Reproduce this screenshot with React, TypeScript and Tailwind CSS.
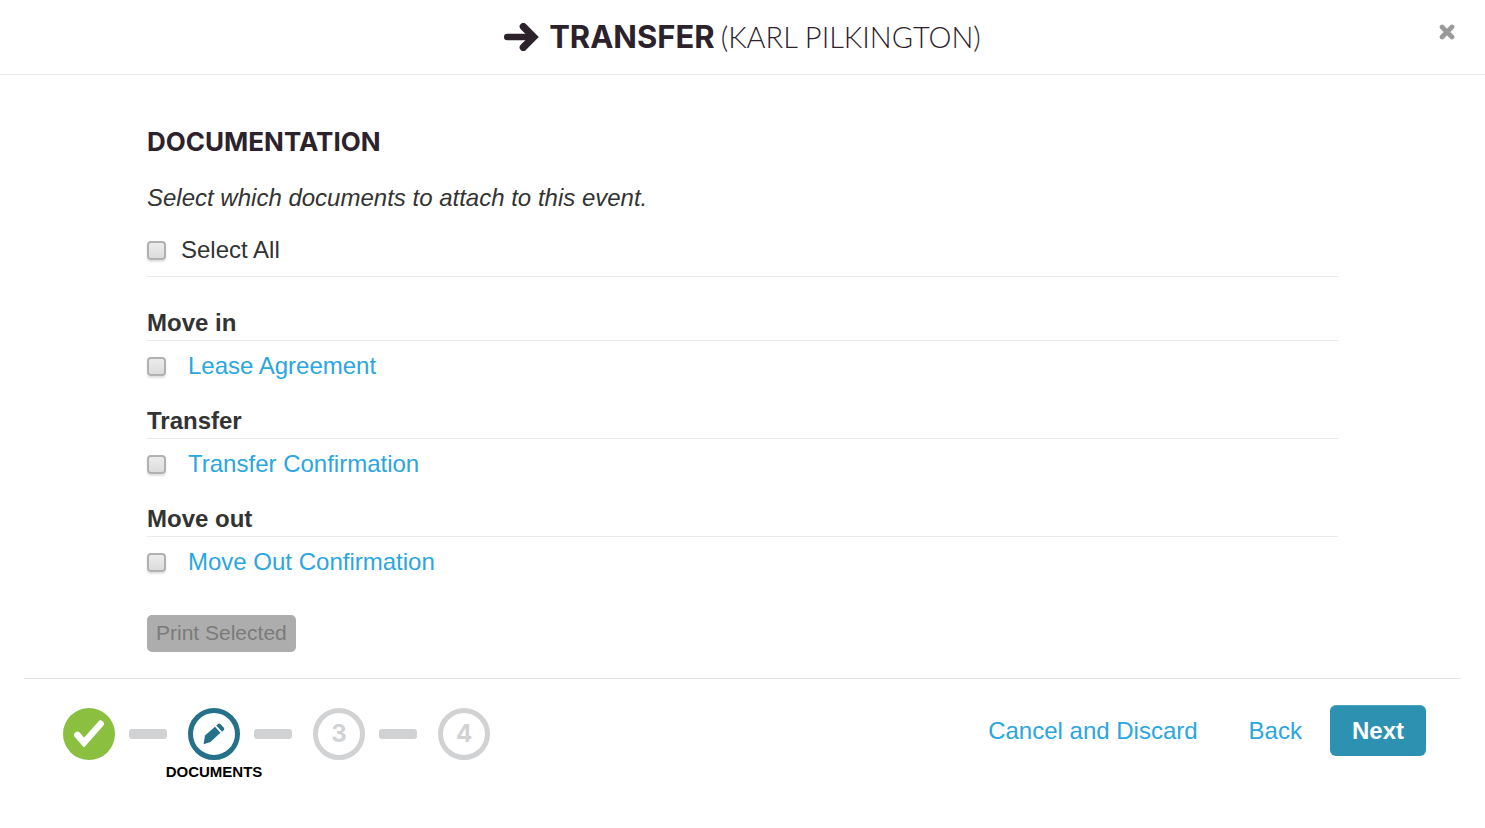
import { Fragment, useState } from "react";
import { clsx } from "clsx";

const SECTIONS = [
  { title: "Move in", document: "Lease Agreement" },
  { title: "Transfer", document: "Transfer Confirmation" },
  { title: "Move out", document: "Move Out Confirmation" },
];

const STEPS = [
  { name: "Details", status: "done" },
  { name: "Documents", status: "current" },
  { name: "3", status: "upcoming" },
  { name: "4", status: "upcoming" },
];

const ArrowIcon = () => (
  <svg width="35" height="28" viewBox="0 0 35 28" fill="none" stroke="currentColor" strokeLinecap="round" aria-hidden="true">
    <path d="M3.3 14H27" strokeWidth="6.6" />
    <path d="M19.3 3.6 29.7 14 19.3 24.4" strokeWidth="7.2" strokeLinejoin="miter" />
  </svg>
);

const CloseIcon = () => (
  <svg width="16" height="16" viewBox="0 0 16 16" fill="none" stroke="currentColor" strokeWidth="4.6" strokeLinecap="round" aria-hidden="true">
    <path d="M3 3l10 10M13 3L3 13" />
  </svg>
);

const CheckIcon = () => (
  <svg width="52" height="52" viewBox="0 0 52 52" fill="none" stroke="#fff" strokeWidth="6.5" strokeLinecap="round" aria-hidden="true">
    <path d="M14.4 27 21 34.6 37.6 15.8" />
  </svg>
);

const PencilIcon = () => (
  <svg width="22" height="22" viewBox="0 0 22 22" className="shrink-0" fill="currentColor" aria-hidden="true">
    <path d="M0.6 21.2 2 12.6 12 3.8 17.4 9.8 7.4 19Z" />
    <path d="M13.3 2.6 15 1.1Q16.4 0 17.6 1.2L20.9 4.8Q21.9 6.1 20.7 7.2L19 8.8Z" />
  </svg>
);

type CheckboxProps = {
  id: string;
  label?: string;
  checked: boolean;
  onChange: () => void;
};

const Checkbox = ({ id, label, checked, onChange }: CheckboxProps) => (
  <input
    id={id}
    type="checkbox"
    aria-label={label}
    checked={checked}
    onChange={onChange}
    className="size-[19px] shrink-0 appearance-none rounded-[4px] border-2 border-[#b1b1b1] bg-linear-to-b from-[#ececec] to-[#dcdcdc] shadow-[0_2px_2px_rgba(0,0,0,0.12)] checked:from-[#2d91b2] checked:to-[#2d91b2]"
  />
);

const Step = ({ name, status }: { name: string; status: string }) => (
  <li
    className={clsx(
      "relative flex size-[52px] items-center justify-center rounded-full",
      status === "done" && "bg-[#8bbf3f]",
      status === "current" && "border-[5px] border-[#25718a] text-[#25718a]",
      status === "upcoming" && "border-[5px] border-[#d1d2d4] text-[#d1d2d4]"
    )}
  >
    {status === "done" && <CheckIcon />}
    {status === "current" && (
      <>
        <PencilIcon />
        <span className="absolute top-full mt-[7px] text-[15px] leading-5 font-bold text-black uppercase">
          {name}
        </span>
      </>
    )}
    {status === "upcoming" && (
      <span className="font-['Inter',sans-serif] text-2xl font-bold">{name}</span>
    )}
  </li>
);

const App = () => {
  const [selected, setSelected] = useState<string[]>([]);
  const allSelected = selected.length === SECTIONS.length;

  const toggle = (document: string) =>
    setSelected((prev) =>
      prev.includes(document) ? prev.filter((d) => d !== document) : [...prev, document]
    );

  return (
    <div className="min-h-screen bg-white font-['Liberation_Sans',Arial,sans-serif] text-2xl text-[#333]">
      {/* Header */}
      <header className="grid grid-cols-[1fr_auto_1fr] border-b border-[#ebebeb] text-[#2b222c]">
        <h1 className="col-start-2 flex h-[74px] items-center gap-[10px] font-['Inter',sans-serif]">
          <ArrowIcon />
          <span className="flex items-baseline gap-[6px]">
            <span className="text-[31px] font-bold">TRANSFER</span>
            <span className="font-['Lato',sans-serif] text-[29px] font-light">(KARL PILKINGTON)</span>
          </span>
        </h1>
        <button type="button" aria-label="Close" className="mt-6 mr-[30px] self-start justify-self-end text-[#999]">
          <CloseIcon />
        </button>
      </header>

      {/* Documents */}
      <main className="px-[147px] pt-12">
        <h2 className="font-['Inter',sans-serif] text-[26px] leading-[38px] font-bold text-[#2b222c]">
          DOCUMENTATION
        </h2>
        <p className="mt-[19px] leading-9 italic">Select which documents to attach to this event.</p>
        <div className="mt-4 flex items-center gap-[15px] border-b border-[#ebebeb] pb-2">
          <Checkbox
            id="select-all"
            checked={allSelected}
            onChange={() => setSelected(allSelected ? [] : SECTIONS.map((s) => s.document))}
          />
          <label htmlFor="select-all" className="leading-9">Select All</label>
        </div>

        <div className="mt-7 flex flex-col gap-5">
          {SECTIONS.map(({ title, document }) => (
            <section key={title}>
              <h3 className="border-b border-[#ebebeb] leading-[35px] font-bold">{title}</h3>
              <div className="flex items-center gap-[22px] pt-2">
                <Checkbox
                  id={document}
                  label={document}
                  checked={selected.includes(document)}
                  onChange={() => toggle(document)}
                />
                <a href="#" className="leading-[34px] text-[#2ba6de]">{document}</a>
              </div>
            </section>
          ))}
        </div>

        <button
          type="button"
          disabled={selected.length === 0}
          className="mt-9 block h-[37px] rounded-[5px] bg-[#adadad] px-[9px] pb-[2px] text-[21px] leading-[34px] text-[#7b7b7b]"
        >
          Print Selected
        </button>
      </main>

      {/* Wizard footer */}
      <footer className="mx-6 mt-[26px] flex items-start justify-between border-t border-[#e5e5e5] pt-[26px] pr-[35px] pl-[39px]">
        <ol className="mt-[3px] flex items-center">
          {STEPS.map((step, index) => (
            <Fragment key={step.name}>
              {index > 0 && (
                <li aria-hidden="true" className="mr-[21px] ml-[14px] h-[10px] w-[38px] rounded-[3px] bg-[#d1d2d4]" />
              )}
              <Step {...step} />
            </Fragment>
          ))}
        </ol>
        <div className="flex items-center">
          <a href="#" className="mr-[51px] text-[#2ba6de]">Cancel and Discard</a>
          <a href="#" className="mr-7 text-[#2ba6de]">Back</a>
          <button
            type="button"
            className="h-[51px] rounded-md border-t border-[#4ea3bf] bg-[#2d91b2] px-[22px] font-bold text-white"
          >
            Next
          </button>
        </div>
      </footer>
    </div>
  );
};

export default App;
